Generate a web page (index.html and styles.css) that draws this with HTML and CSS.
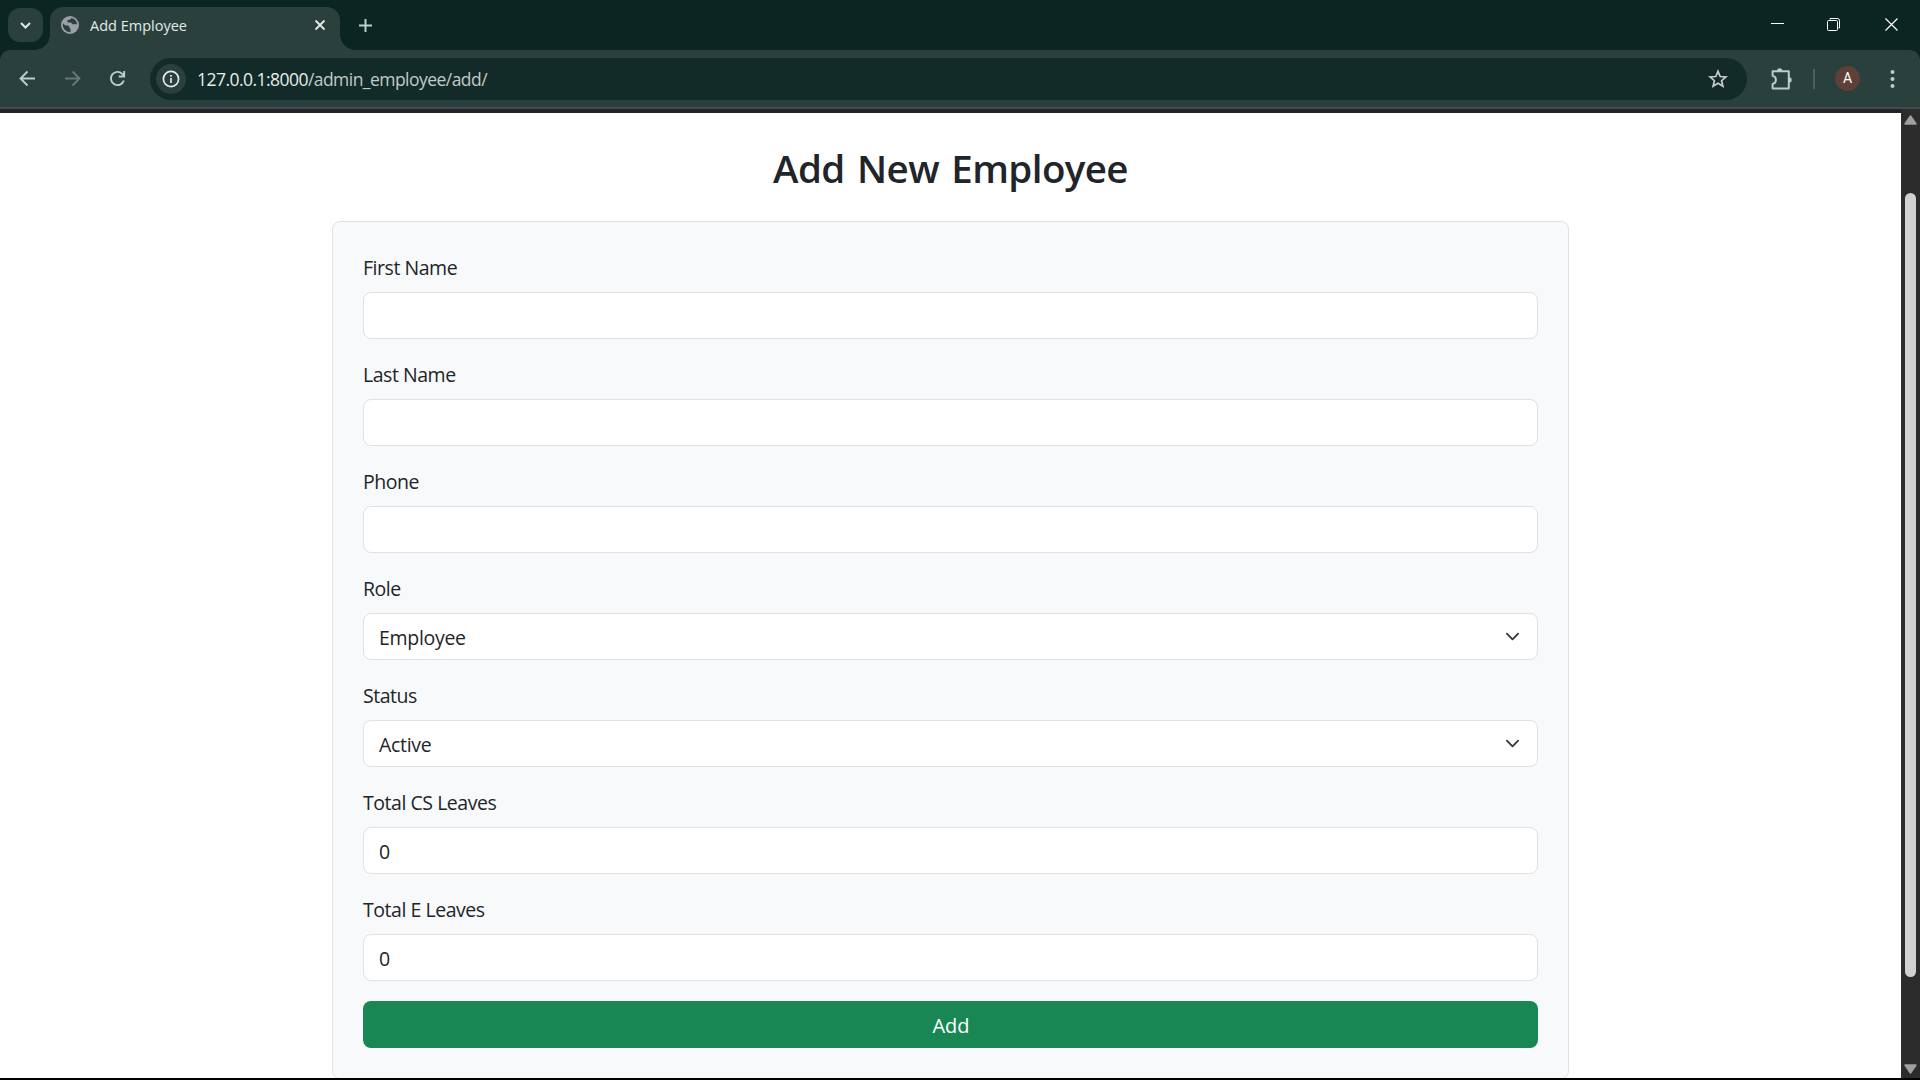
FILE: index.html
```
<!DOCTYPE html>
<html lang="en">
<head>
<meta charset="utf-8">
<title>Add Employee</title>
<link rel="stylesheet" href="styles.css">
</head>
<body>
<div class="window">
  <header class="tabstrip">
    <button class="tab-search" aria-label="Search tabs">
      <svg width="13" height="13" viewBox="0 0 13 13"><path d="M2 4l4.5 4.5L11 4" fill="none" stroke="#dfe8e6" stroke-width="2"/></svg>
    </button>
    <div class="tab">
      <svg class="globe" width="18" height="18" viewBox="0 0 18 18"><circle cx="9" cy="9" r="9" fill="#9aa0a6"/><path d="M2 7.200c1.200 1.700 2.200 2.200 4.300 2.300 1.700.1 2.200.7 2.100 1.800-.1 1 .5 1.300 1.100 1.300v3.600A7.300 7.300 0 0 1 2 7.200zM10.300 2c-.2 1.200-1 1.800-2.200 1.800-1.400 0-1.700.6-1.700 1.500 0 .8.5 1.200 1.500 1.200h1.400c1.200 0 1.500.8 2.100 1.500.5.5 1.200.6 1.800.3.900-.4 1.900-.3 2.900.5A7.300 7.300 0 0 0 10.300 2z" fill="#29403d"/></svg>
      <span class="tab-title">Add Employee</span>
      <svg class="tab-close" width="12" height="12" viewBox="0 0 12 12"><path d="M1.500 1.500l9 9M10.500 1.500l-9 9" stroke="#e3ebe9" stroke-width="1.800"/></svg>
    </div>
    <svg class="new-tab" width="13" height="13" viewBox="0 0 13 13"><path d="M6.500 0v13M0 6.500h13" stroke="#b9d0cb" stroke-width="2"/></svg>
    <div class="window-controls">
      <svg width="13" height="13" viewBox="0 0 13 13"><path d="M0 5.500h13" stroke="#fff"/></svg>
      <svg width="13" height="13" viewBox="0 0 13 13"><path d="M3 1.500V.5h7.500a2 2 0 0 1 2 2V10h-1" fill="none" stroke="#fff"/><rect x=".5" y="2.500" width="10" height="10" rx="1" fill="none" stroke="#fff"/></svg>
      <svg width="13" height="13" viewBox="0 0 13 13"><path d="M.5.5l12 12M12.500.5l-12 12" stroke="#fff" stroke-width="1.200"/></svg>
    </div>
  </header>

  <div class="toolbar-back">
    <nav class="toolbar">
      <button class="nav-button" aria-label="Back"><svg width="17" height="17" viewBox="0 0 17 17"><path d="M16 8.500H2M8.500 1.500l-7 7 7 7" fill="none" stroke="#b5cfca" stroke-width="1.900"/></svg></button>
      <button class="nav-button" aria-label="Forward"><svg width="17" height="17" viewBox="0 0 17 17"><path d="M1 8.500h14M8.500 1.500l7 7-7 7" fill="none" stroke="#667875" stroke-width="1.900"/></svg></button>
      <button class="nav-button" aria-label="Reload"><svg width="17" height="17" viewBox="0 0 17 17"><path d="M14.800 10.400A6.600 6.600 0 1 1 13.200 3.900L15 5.700M15.200 1v5.500H9.700" fill="none" stroke="#b5cfca" stroke-width="1.900"/></svg></button>
      <div class="omnibox">
        <span class="site-info"><svg width="18" height="18" viewBox="0 0 18 18"><circle cx="9" cy="9" r="7.600" fill="none" stroke="#e3ebe9" stroke-width="1.700"/><path d="M9 8v5M9 5v1.700" stroke="#e3ebe9" stroke-width="1.700"/></svg></span>
        <span class="url"><span class="host">127.0.0.1:8000</span>/admin_employee/add/</span>
        <svg class="star" width="20" height="20" viewBox="0 0 20 20"><path d="M10 2.300l2.200 5.200 5.700.5-4.300 3.700 1.300 5.500-4.900-2.900-4.900 2.900 1.300-5.500L2.100 8l5.700-.5z" fill="none" stroke="#c7cfcd" stroke-width="1.700"/></svg>
      </div>
      <svg class="extensions" width="24" height="24" viewBox="0 0 24 24"><path d="M3.600 4.200h16.200v17.200H3.600V17c2.300-.6 3.300-2.200 3.300-4.100s-1-3.500-3.300-4.100z" fill="none" stroke="#b5cfca" stroke-width="2" stroke-linejoin="round"/><path d="M8 4a2.700 2.700 0 0 1 5.400 0zM20 10.200a2.700 2.700 0 0 1 0 5.400z" fill="#b5cfca"/></svg>
      <span class="divider"></span>
      <span class="avatar">A</span>
      <svg class="menu" width="5" height="18" viewBox="0 0 5 18"><g fill="#b5cfca"><circle cx="2.500" cy="2" r="2"/><circle cx="2.500" cy="9" r="2"/><circle cx="2.500" cy="16" r="2"/></g></svg>
    </nav>
  </div>

  <div class="viewport">
    <main class="page">
      <h2 class="page-title">Add New Employee</h2>
      <form class="card">
        <label class="field"><span class="field-label">First Name</span><input class="control" type="text"></label>
        <label class="field"><span class="field-label">Last Name</span><input class="control" type="text"></label>
        <label class="field"><span class="field-label">Phone</span><input class="control" type="text"></label>
        <label class="field"><span class="field-label">Role</span>
          <span class="control select"><span>Employee</span><svg width="15" height="15" viewBox="0 0 16 16"><path d="m2 5 6 6 6-6" fill="none" stroke="#343a40" stroke-width="2" stroke-linecap="round" stroke-linejoin="round"/></svg></span></label>
        <label class="field"><span class="field-label">Status</span>
          <span class="control select"><span>Active</span><svg width="15" height="15" viewBox="0 0 16 16"><path d="m2 5 6 6 6-6" fill="none" stroke="#343a40" stroke-width="2" stroke-linecap="round" stroke-linejoin="round"/></svg></span></label>
        <label class="field"><span class="field-label">Total CS Leaves</span><input class="control" type="text" value="0"></label>
        <label class="field"><span class="field-label">Total E Leaves</span><input class="control" type="text" value="0"></label>
        <button class="submit" type="button">Add</button>
      </form>
    </main>
    <aside class="scrollbar">
      <svg width="13" height="10" viewBox="0 0 13 10"><path d="M6.500 1.300L11.700 8.700H1.300z" fill="#9f9f9f" stroke="#9f9f9f" stroke-width="2" stroke-linejoin="round"/></svg>
      <span class="thumb"></span>
      <svg width="13" height="10" viewBox="0 0 13 10"><path d="M6.500 8.700L1.300 1.300h10.400z" fill="#9f9f9f" stroke="#9f9f9f" stroke-width="2" stroke-linejoin="round"/></svg>
    </aside>
  </div>
</div>
</body>
</html>
```
FILE: styles.css
```
* { box-sizing: border-box; }

body {
  margin: 0;
  background: #000;
  color: #212529;
  font-family: "Open Sans", "Noto Sans", sans-serif;
}

button { margin: 0; padding: 0; border: 0; background: none; font: inherit; }
svg { display: block; flex: none; }

.window {
  display: flex;
  flex-direction: column;
  width: 1920px;
  height: 1080px;
  padding-bottom: 2px;
  overflow: hidden;
}

/* Tab strip */
.tabstrip {
  display: flex;
  flex: none;
  height: 50px;
  padding-left: 8px;
  background: #0b2523;
}

.tab-search {
  display: grid;
  place-items: center;
  width: 35px;
  height: 34px;
  margin-top: 8px;
  border-radius: 12px;
  background: #29403d;
}

.tab {
  position: relative;
  display: flex;
  align-items: center;
  width: 290px;
  height: 43px;
  margin: 7px 0 0 7px;
  padding: 0 14px 7px 11px;
  border-radius: 13px 13px 0 0;
  background: #29403d;
}

.tab::before,
.tab::after {
  content: "";
  position: absolute;
  bottom: 0;
  width: 15px;
  height: 15px;
}
.tab::before { right: 100%; background: radial-gradient(circle at 0 0, transparent 14.5px, #29403d 15px); }
.tab::after { left: 100%; background: radial-gradient(circle at 100% 0, transparent 14.5px, #29403d 15px); }

.tab-title {
  flex: 1;
  margin-left: 11px;
  padding-top: 2px;
  color: #e3ebe9;
  font-size: 14.5px;
  line-height: 20px;
}

.new-tab { margin: 19px 0 0 19px; }

.window-controls {
  display: flex;
  gap: 44px;
  margin: 18px 22px 0 auto;
}
.window-controls svg:first-child { margin-right: -1px; }
.window-controls svg:last-child { margin-left: 1px; }

/* Toolbar */
.toolbar-back { flex: none; background: #0b2523; }

.toolbar {
  display: flex;
  align-items: center;
  height: 59px;
  padding: 0 25px 0 5px;
  border-bottom: 2px solid #454b4a;
  border-radius: 10px 10px 0 0;
  background: #29403d;
}

.nav-button {
  display: grid;
  place-items: center;
  width: 45px;
  height: 42px;
}

.omnibox {
  display: flex;
  align-items: center;
  width: 1597px;
  height: 42px;
  margin-left: 10px;
  padding: 0 19px 0 6px;
  border-radius: 21px;
  background: #122a28;
}

.site-info {
  display: grid;
  place-items: center;
  width: 30px;
  height: 30px;
  border-radius: 50%;
  background: #29403d;
}

.url {
  flex: 1;
  margin-left: 11px;
  color: #c2cbc9;
  font-size: 17.5px;
  line-height: 24px;
  letter-spacing: -.54px;
}
.host { color: #e6eeec; }

.extensions { margin-left: 22px; }
.divider { width: 2px; height: 20px; margin-left: 20px; background: #46615c; }

.avatar {
  width: 25px;
  height: 25px;
  margin-left: 20px;
  border-radius: 50%;
  background: #5d4037;
  color: #fff;
  font: 14px/25px Roboto, sans-serif;
  text-align: center;
}
.menu { margin-left: 30px; }

/* Page area */
.viewport { display: flex; flex: 1; min-height: 0; }

.page {
  flex: 1;
  display: flex;
  flex-direction: column;
  align-items: center;
  overflow: hidden;
  padding-top: 31px;
  border-top: 4px solid #212529;
  background: #fff;
}

.page-title {
  margin: 0 0 29px;
  font-size: 38.5px;
  font-weight: 600;
  line-height: 48px;
  letter-spacing: -.6px;
  word-spacing: 3px;
}

.card {
  flex: none;
  width: 1237px;
  padding: 30px;
  border: 1px solid #dee2e6;
  border-radius: 8px;
  background: #f8f9fa;
}

.field { display: block; margin-bottom: 20px; }

.field-label {
  display: block;
  margin-bottom: 9px;
  padding-top: 1px;
  font-size: 19.5px;
  line-height: 30px;
  letter-spacing: -.46px;
}

.control {
  display: block;
  width: 100%;
  height: 47px;
  padding: 8px 15px 7px;
  border: 1px solid #dee2e6;
  border-radius: 8px;
  outline: 0;
  background: #fff;
  color: #212529;
  font-family: inherit;
  font-size: 19.5px;
  line-height: 30px;
  letter-spacing: -.3px;
}

.select {
  display: flex;
  align-items: flex-start;
  justify-content: space-between;
  padding-right: 17px;
}
.select span { padding-top: 1px; }
.select svg { margin-top: 7px; }

.submit {
  display: block;
  width: 100%;
  height: 47px;
  padding: 2px 0 0 1px;
  border-radius: 8px;
  background: #198754;
  color: #fff;
  font-size: 20px;
  line-height: 30px;
}

/* Scrollbar */
.scrollbar {
  display: flex;
  flex-direction: column;
  align-items: center;
  width: 19px;
  padding: 6px 0 4px;
  background: #2c2c2c;
}

.thumb {
  width: 11px;
  height: 784px;
  margin: 68px 0 auto;
  border-radius: 6px;
  background: #d1d1d1;
}
```
